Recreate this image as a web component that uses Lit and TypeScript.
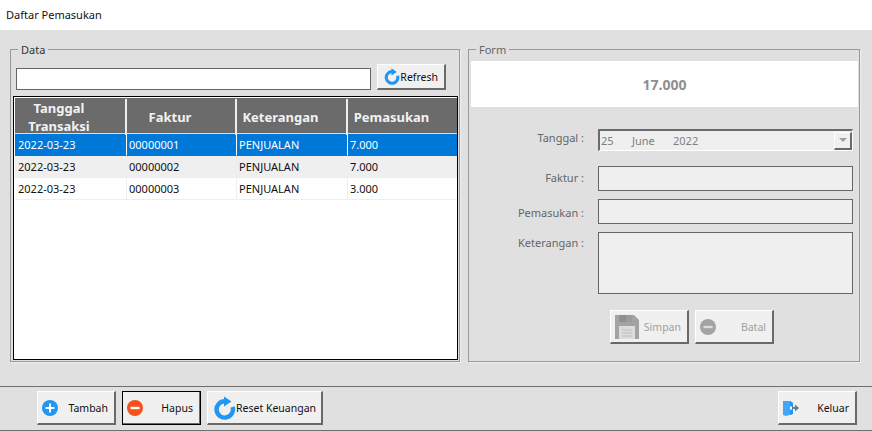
import { LitElement, html, css } from "lit";
import { customElement } from "lit/decorators.js";

const ROWS = [
  ["2022-03-23", "00000001", "PENJUALAN", "7.000"],
  ["2022-03-23", "00000002", "PENJUALAN", "7.000"],
  ["2022-03-23", "00000003", "PENJUALAN", "3.000"],
];

const plus = (c: string, size = 16) => html`<svg width=${size} height=${size} viewBox="0 0 16 16"><circle cx="8" cy="8" r="8" fill=${c}/><rect x="3.5" y="7" width="9" height="2" fill="#fff"/><rect x="7" y="3.5" width="2" height="9" fill="#fff"/></svg>`;
const minus = (c: string, bar = "#fff") => html`<svg width="16" height="16" viewBox="0 0 16 16"><circle cx="8" cy="8" r="8" fill=${c}/><rect x="3.5" y="6.8" width="9" height="2.4" fill=${bar}/></svg>`;
const refresh = (size: number) => html`<svg width=${size} height=${size} viewBox="0 0 24 24"><path d="M13 5.2A8.2 8.2 0 1 0 20.6 11" fill="none" stroke="#2196f3" stroke-width="4.4"/><path d="M12 0.5L19.5 5.6L12 10.5Z" fill="#2196f3"/></svg>`;
const floppy = html`<svg width="24" height="24" viewBox="0 0 24 24"><path d="M0 0H19L24 5V24H0Z" fill="#a3a3a3"/><rect x="4" y="0" width="13" height="7" fill="#8f8f8f"/><rect x="11" y="0" width="6" height="7" fill="#9b9b9b"/><rect x="4" y="11" width="16" height="13" fill="#dcdcdc"/><path d="M7 15H17M7 18H17M7 21H17" stroke="#bdbdbd" stroke-width="1"/></svg>`;
const exit = html`<svg width="16" height="16" viewBox="0 0 16 16"><path d="M0 1H7L10 3V14L3 16L0 15Z" fill="#42a5f5"/><path d="M7 1L10 3V14L7 15Z" fill="#2196f3"/><path d="M8 7H12V4.5L16 8L12 11.5V9H8Z" fill="#607d8b"/><rect x="7" y="6.5" width="2" height="3" fill="#fff"/></svg>`;

@customElement("app-root")
export class AppRoot extends LitElement {
  static styles = css`
    :host {
      display: block;
      width: 872px;
      height: 431px;
      background: #e0e0e0;
      font-family: "Noto Sans", sans-serif;
      font-size: 11px;
      color: #111;
      overflow: hidden;
    }
    .page { display: flex; flex-direction: column; height: 431px; }
    .title {
      height: 30px;
      flex: none;
      background: #fff;
      display: flex;
      align-items: center;
      padding-left: 6px;
      box-sizing: border-box;
      padding-bottom: 1px;
    }
    .main {
      height: 356px;
      flex: none;
      box-sizing: border-box;
      padding: 13px 12px 0 10px;
      display: grid;
      grid-template-columns: 450px 392px;
      column-gap: 8px;
      align-items: start;
    }
    fieldset {
      margin: 0;
      box-sizing: border-box;
      height: 319px;
      min-width: 0;
      border: 1px solid #999;
      box-shadow: 1px 1px 0 #eee;
      padding: 0;
    }
    legend {
      margin-left: 7px;
      padding: 0 3px;
      height: 13px;
      line-height: 13px;
      color: #333;
    }
    .form legend { color: #666; }

    .search { display: flex; gap: 6px; padding: 8px 13px 0 5px; align-items: flex-end; }
    .search .box {
      flex: 1;
      height: 22px;
      box-sizing: border-box;
      background: #fff;
      border: 1px solid #666;
    }
    button {
      font: inherit;
      font-size: 10.5px;
      color: inherit;
      background: #f0f0f0;
      box-sizing: border-box;
      border-style: solid;
      border-width: 1px 2px 2px 1px;
      border-color: #fff #696969 #696969 #fff;
      padding: 0 6px 0 4px;
      margin: 0;
      display: flex;
      align-items: center;
      justify-content: space-between;
      height: 34px;
      width: 79px;
      white-space: nowrap;
    }
    button svg { flex: none; }
    button.refresh { width: 69px; height: 26px; padding: 0 6px 0 5px; }
    button.wide { width: 116px; padding: 0 6px 0 4px; }
    button.focus { outline: 1px solid #000; outline-offset: -1px; }
    button.off { color: #a0a0a0; }

    .table {
      margin: 6px 0 0 2px;
      width: 445px;
      height: 264px;
      box-sizing: border-box;
      background: #fff;
      border: 1px solid #000;
      padding: 1px 0 0 1px;
    }
    .tr { display: grid; grid-template-columns: 112px 110px 111px 1fr; }
    .thead {
      background: #6b6b6b;
      height: 36px;
      border-bottom: 1px solid #ddd;
      box-sizing: border-box;
    }
    .th {
      color: #f2f2f2;
      font-weight: 700;
      font-size: 13px;
      line-height: 18px;
      text-align: center;
      padding-right: 22px;
      display: flex;
      align-items: center;
      justify-content: center;
      border-right: 2px solid #eee;
      margin: 1px 0;
    }
    .th:last-child { border-right: 0; }
    .row { height: 22px; align-items: stretch; }
    .row .td {
      display: flex;
      align-items: center;
      padding-left: 2px;
      border-right: 1px solid #eee;
      border-bottom: 1px solid #eee;
      box-sizing: border-box;
      overflow: hidden;
    }
    .row .td:first-child { padding-left: 3px; }
    .row:nth-child(odd) { background: #efefef; }
    .row.sel { background: #0078d7; color: #fff; }
    .row.sel .td { border-color: #0078d7; border-right-color: #fff; }
    .row .td:last-child { border-right: 0; }

    .banner {
      margin: 5px 1px 0 2px;
      height: 46px;
      background: #fff;
      display: flex;
      align-items: center;
      justify-content: center;
      color: #8f8f8f;
      font-weight: 700;
      font-size: 14px;
    }
    .fields {
      display: grid;
      grid-template-columns: 115px 255px;
      column-gap: 14px;
      padding: 22px 0 0 0;
      color: #666;
    }
    .lab { text-align: right; }
    .date {
      grid-column: 2;
      height: 22px;
      box-sizing: border-box;
      background: #efefef;
      border-style: solid;
      border-width: 2px 1px 1px 2px;
      border-color: #6b6b6b #fff #fff #6b6b6b;
      display: flex;
      align-items: center;
      padding: 0 0 1px 1px;
      color: #808080;
    }
    .date .d { width: 31px; }
    .date .m { width: 41px; }
    .arrow {
      margin: 0 0 -1px auto;
      width: 18px;
      height: 18px;
      box-sizing: border-box;
      background: #f0f0f0;
      border-style: solid;
      border-width: 1px 2px 2px 1px;
      border-color: #fff #696969 #696969 #fff;
      display: flex;
      align-items: center;
      justify-content: center;
    }
    .arrow i {
      width: 0; height: 0;
      border-left: 4px solid transparent;
      border-right: 4px solid transparent;
      border-top: 4px solid #a0a0a0;
    }
    .in {
      height: 25px;
      box-sizing: border-box;
      background: #efefef;
      border: 1px solid #666;
    }
    .in.area { height: 62px; }
    .lab.l1 { line-height: 18px; }
    .lab.l2 { margin-top: 15px; line-height: 24px; }
    .lab.l3 { margin-top: 10px; line-height: 23px; }
    .lab.l4 { margin-top: 8px; line-height: 22px; }
    .r2 { margin-top: 15px; }
    .r3 { margin-top: 8px; }
    .r4 { margin-top: 8px; }
    .actions { display: flex; gap: 6px; padding: 16px 0 0 141px; }

    .footer {
      height: 45px;
      flex: none;
      box-sizing: border-box;
      border-top: 1px solid #6f6f6f;
      border-bottom: 1px solid #6f6f6f;
      display: flex;
      align-items: flex-start;
      padding: 4px 15px 0 37px;
      gap: 6px;
    }
    .footer .spacer { flex: 1; }
  `;

  render() {
    return html`<div class="page">
      <div class="title">Daftar Pemasukan</div>
      <div class="main">
        <fieldset>
          <legend>Data</legend>
          <div class="search">
            <div class="box"></div>
            <button class="refresh">${refresh(17)}<span>Refresh</span></button>
          </div>
          <div class="table">
            <div class="tr thead">
              <div class="th">Tanggal<br />Transaksi</div>
              <div class="th">Faktur</div>
              <div class="th">Keterangan</div>
              <div class="th">Pemasukan</div>
            </div>
            ${ROWS.map(
              (r, i) => html`<div class="tr row ${i === 0 ? "sel" : ""}">
                ${r.map((c) => html`<div class="td">${c}</div>`)}
              </div>`
            )}
          </div>
        </fieldset>
        <fieldset class="form">
          <legend>Form</legend>
          <div class="banner">17.000</div>
          <div class="fields">
            <div class="lab l1">Tanggal :</div>
            <div class="date"><span class="d">25</span><span class="m">June</span><span>2022</span><div class="arrow"><i></i></div></div>
            <div class="lab l2">Faktur :</div>
            <div class="in r2"></div>
            <div class="lab l3">Pemasukan :</div>
            <div class="in r3"></div>
            <div class="lab l4">Keterangan :</div>
            <div class="in area r4"></div>
          </div>
          <div class="actions">
            <button class="off">${floppy}<span>Simpan</span></button>
            <button class="off">${minus("#a3a3a3", "#dcdcdc")}<span>Batal</span></button>
          </div>
        </fieldset>
      </div>
      <div class="footer">
        <button>${plus("#2196f3")}<span>Tambah</span></button>
        <button class="focus">${minus("#f4511e")}<span>Hapus</span></button>
        <button class="wide">${refresh(24)}<span>Reset Keuangan</span></button>
        <div class="spacer"></div>
        <button>${exit}<span>Keluar</span></button>
      </div>
    </div>`;
  }
}
